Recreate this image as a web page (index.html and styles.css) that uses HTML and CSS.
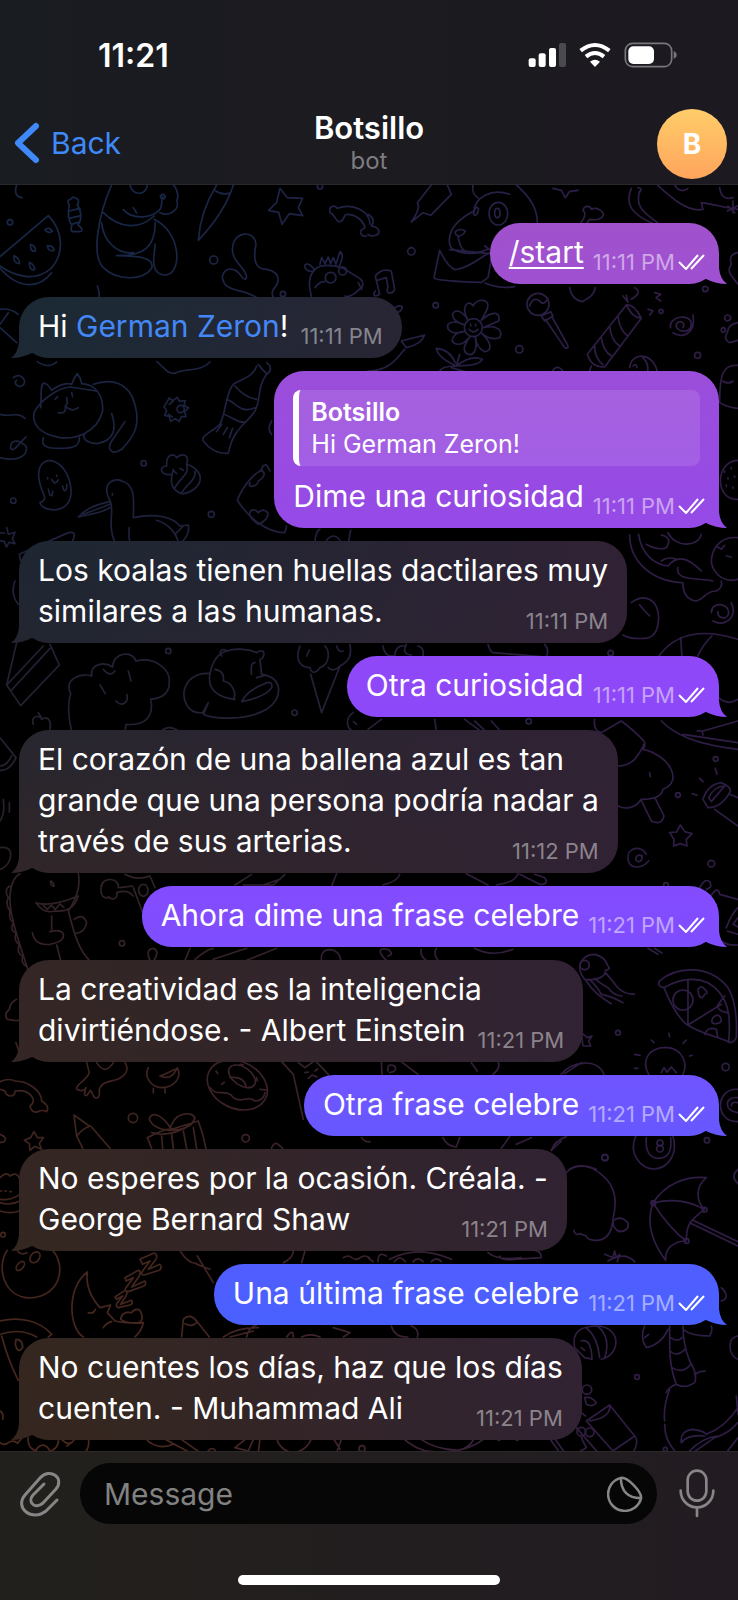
FILE: index.html
```html
<!DOCTYPE html>
<html lang="es">
<head>
<meta charset="utf-8">
<meta name="viewport" content="width=device-width, initial-scale=1">
<title>Botsillo</title>
<link rel="stylesheet" href="styles.css">
</head>
<body>
<svg class="defs" aria-hidden="true">
  <symbol id="checks" viewBox="0 0 27 16">
    <path d="M1 8 L8 15 L20 1 M13 15 L26 1" fill="none" stroke="currentColor" stroke-width="2"/>
  </symbol>
</svg>
<div class="app">
  <header class="top">
    <div class="status">
      <span class="clock">11:21</span>
      <svg class="status-icons" viewBox="25 36 450 78" aria-hidden="true">
        <g fill="#fff">
          <rect x="27" y="85" width="21" height="26" rx="6"/>
          <rect x="57" y="70" width="21" height="41" rx="6"/>
          <rect x="88" y="54" width="21" height="57" rx="6"/>
          <rect x="118" y="39" width="21" height="72" rx="6" fill="#4b4a4e"/>
          <path d="M211 95 Q226 83 241 95 L226 111 Z"/>
          <rect x="326" y="49" width="77" height="53" rx="15"/>
        </g>
        <g fill="none" stroke="#fff" stroke-width="12">
          <path d="M183 62 Q226 28 269 62"/>
          <path d="M199 80 Q226 58 253 80"/>
        </g>
        <rect x="317" y="40" width="139" height="70" rx="22" fill="none" stroke="#77767a" stroke-width="5"/>
        <path d="M462 64 Q471 67 471 75 Q471 83 462 86 Z" fill="#77767a"/>
      </svg>
    </div>
    <div class="nav">
      <button class="back" type="button">
        <svg class="chevron" viewBox="0 0 26 42" aria-hidden="true"><path d="M22 4 L4 21 L22 38" fill="none" stroke="currentColor" stroke-width="6" stroke-linecap="round" stroke-linejoin="round"/></svg>
        Back
      </button>
      <div class="title">
        <h1>Botsillo</h1>
        <span>bot</span>
      </div>
      <button class="avatar" type="button" aria-label="Botsillo">B</button>
    </div>
  </header>

  <main class="chat">
    <svg class="wallpaper" viewBox="0 184 738 1267" preserveAspectRatio="xMidYMin slice" aria-hidden="true">
      <defs>
        <linearGradient id="down" x1="0" y1="0" x2="0" y2="1">
          <stop offset="0" stop-color="#172748"/><stop offset=".28" stop-color="#1e213b"/><stop offset=".5" stop-color="#2a212d"/><stop offset=".7" stop-color="#3e2320"/><stop offset="1" stop-color="#4a281c"/>
        </linearGradient>
        <linearGradient id="across" x1="0" y1="0" x2="1" y2="0">
          <stop offset=".2" stop-color="#2d1c44" stop-opacity="0"/><stop offset=".85" stop-color="#2f1d46"/>
        </linearGradient>
        <mask id="doodles" maskUnits="userSpaceOnUse" x="0" y="184" width="738" height="1267">
          <g fill="none" stroke="#fff" stroke-width="5" stroke-linecap="round" stroke-linejoin="round">
            <g transform="translate(0 180) scale(.3333)">
              <path d="M50 12 C42 35 50 50 66 50 M0 227 L145 104 C190 150 195 220 150 265 C105 300 50 290 0 255 M0 262 C60 330 120 320 155 275"/>
              <path d="M135 146 q12 -10 22 4 q-12 10 -22 -4 M92 190 q16 6 14 20 q-16 4 -14 -20 M142 194 q20 0 20 14 q-18 4 -20 -14 M42 224 q18 8 16 24 q-18 0 -16 -24 M88 244 q16 8 16 22 q-16 4 -16 -22"/>
              <path d="M208 72 C195 52 215 60 218 48 C228 50 242 55 232 72 C246 92 246 115 234 132 C252 145 246 152 238 152 H220 C212 152 212 142 216 134 C202 115 204 90 208 72 M208 90 L240 82 M208 112 L242 104 M216 130 L240 122"/>
              <path d="M335 12 C300 90 270 220 310 260 C350 300 430 300 455 262 C465 225 400 225 350 224 C430 225 465 200 466 125 M310 95 C360 145 420 145 462 105 M305 125 C310 180 350 220 400 215 M462 115 C540 150 550 270 500 282 C450 285 460 230 466 190 M390 12 C395 45 440 45 442 12 M370 86 C400 120 460 110 480 85 C490 70 482 55 489 47 M400 80 L410 96 M489 40 a7 7 0 1 1 -1 0 M480 95 C515 110 540 80 530 60 C540 40 525 15 520 12"/>
              <path d="M650 12 C620 60 600 110 595 178 C650 120 685 60 700 12 M645 28 Q668 45 692 35"/>
              <path d="M840 22 L862 50 L908 52 L895 80 L908 104 L868 98 L846 130 L836 94 L806 88 L830 64 Z"/>
              <path d="M990 95 C985 75 1005 70 1012 82 C1060 65 1110 90 1110 130 M990 95 C1005 100 1008 125 1020 122 C1035 120 1030 100 1040 100 C1070 100 1090 120 1095 140 C1070 150 1085 170 1100 165"/>
              <path d="M770 350 C735 325 700 335 675 310 C655 280 680 255 705 268 C725 275 725 300 738 294 C750 270 690 240 698 200 C700 150 765 145 768 190 C755 250 775 265 800 265 C850 275 835 310 820 325 C812 340 820 350 825 355"/>
              <path d="M935 350 C925 310 925 285 945 265 C960 250 1000 250 1030 262 L1075 290 C1095 300 1090 320 1078 325 C1060 345 1040 350 1035 345 M940 272 C905 270 910 240 930 252 Q942 262 944 268 M960 250 L965 230 L975 248 L985 228 L992 248 L1000 230 L1008 250 L1020 212 Q1035 220 1018 255 M945 320 Q960 300 975 302 M1075 305 L1085 325"/>
              <circle cx="992" cy="290" r="16"/><circle cx="1028" cy="270" r="12"/><circle cx="30" cy="124" r="8"/><circle cx="641" cy="237" r="12"/><circle cx="849" cy="339" r="8"/><circle cx="960" cy="16" r="8"/><circle cx="431" cy="847" r="8"/><circle cx="40" cy="959" r="8"/><circle cx="634" cy="1000" r="9"/>
              <path d="M292 315 Q300 335 297 355 M0 385 Q30 380 55 400 M0 440 L50 485 M0 430 L25 395 M470 542 C490 555 500 580 525 577 C555 560 600 575 630 543 M112 542 Q145 565 170 543"/>
              <path d="M40 590 C60 575 82 595 70 612 C55 625 38 605 50 598 M0 700 C30 710 50 690 75 712 M0 830 C60 845 85 820 78 795 C50 770 30 780 32 802 C40 815 55 790 78 768"/>
              <path d="M122 680 C125 640 120 610 132 606 Q145 610 155 628 C180 610 200 605 215 610 Q222 590 232 578 Q242 590 245 608 C285 610 310 640 308 690 C290 760 220 775 180 770 C120 760 95 730 102 695 C125 650 180 620 210 618 L290 630 M280 610 C340 590 380 610 398 650 C425 720 410 760 365 805 C335 825 320 805 335 780 L375 722 M335 698 C350 740 345 780 290 788 C250 785 245 765 258 755 M130 770 C120 800 150 802 180 802 C215 802 240 798 238 770 M200 650 Q205 670 196 675 Q200 700 175 695 M196 675 Q215 695 235 680 M165 655 l8 -8 M215 635 l3 12"/>
              <path d="M500 665 l8 -14 l10 8 l14 -10 l6 12 l18 -2 l-4 14 l14 8 l-12 10 l4 16 l-14 0 l-6 14 l-12 -8 l-14 8 l-4 -14 l-14 -4 l6 -14 l-8 -12 z M520 660 l-12 10 M505 700 l12 8"/><circle cx="542" cy="684" r="11"/>
              <path d="M770 555 C758 590 730 590 700 610 C675 640 680 690 660 730 C640 750 600 765 610 780 Q640 820 685 817 C700 740 740 730 765 690 C785 650 770 620 800 580 C815 570 815 555 800 545 M775 550 Q785 565 800 578 M705 615 Q735 650 770 655 M680 655 C710 665 720 700 765 680 M672 700 C700 710 720 730 738 722 M665 730 l-15 22 M682 740 l-12 20 M698 742 l-10 28"/>
              <path d="M515 880 C480 885 475 855 500 855 C498 820 520 815 530 830 C545 815 570 820 560 850 C590 860 605 880 600 900 C595 920 565 940 545 938 C510 925 510 900 520 865 M560 852 C570 880 540 890 525 920 M585 870 C590 895 560 910 545 935 M522 870 l8 8 M540 862 l10 6"/>
              <path d="M120 965 C140 960 135 945 125 925 C105 870 120 840 150 838 C195 845 215 900 213 940 C210 975 180 990 155 986 C135 985 122 975 120 965 M145 925 C150 950 158 950 158 930 M188 915 C190 935 202 935 200 910 M155 895 Q165 915 175 897 M143 890 v4 M170 882 v4"/>
              <path d="M345 1085 C320 1030 345 990 330 960 C300 900 350 890 365 900 C410 910 400 970 400 1010 C470 995 520 1010 540 1035 L565 1032 Q570 1060 545 1084 M330 962 C290 970 255 985 235 1008 C270 1000 310 995 330 980 M330 970 L250 1000 M388 1040 Q385 1065 390 1085 M470 1018 C510 1030 530 1060 535 1085 M525 1060 L550 1035 M337 938 v5"/>
              <path d="M20 1040 l5 20 l20 -6 l-8 20 l8 14 l-18 -4 l-8 14 l-6 -16 l-16 -4 M0 1055 l14 2 z M58 1120 L205 1055 Q235 1050 215 1085 M58 1120 L62 1140"/>
              <path d="M855 1055 C800 1055 745 1010 712 958 C730 910 770 870 785 870 Q785 850 800 852 L810 870 M855 1055 L860 1035 M750 905 C740 925 775 915 775 900 C800 885 795 870 780 868 M775 1030 Q740 1005 752 990 Q765 982 775 995 Q790 980 803 995 Q808 1015 775 1030 M815 720 Q800 745 815 760"/>
              <path d="M945 1085 C945 1060 955 1045 960 1045 M975 1085 Q1000 1045 1025 1085 M1045 1085 L1052 1048"/>
            </g>
            <g transform="translate(368 180) scale(.3333)">
              <path d="M190 12 L148 65 Q160 80 130 123 L165 95 L188 103 L250 40 L238 12 M0 100 Q25 115 10 135 Q40 140 30 160 Q10 170 0 160"/>
              <path d="M315 12 C312 30 318 45 330 50 M425 40 C370 20 320 50 318 90 C250 125 240 160 245 190 C250 215 310 225 345 210 L360 205 M445 12 C490 50 510 90 508 130 M262 152 Q275 140 292 150 Q285 165 270 165 Q260 160 262 152 M270 165 Q275 200 290 210 M350 195 l16 12"/>
              <ellipse cx="391" cy="98" rx="28" ry="34"/><ellipse cx="388" cy="96" rx="8" ry="14"/><ellipse cx="324" cy="91" rx="6" ry="12" transform="rotate(20 324 91)"/>
              <path d="M215 208 L198 290 Q205 300 340 304 L360 290 L372 225 M215 208 Q240 260 262 266 C310 260 340 225 365 215 M245 206 L365 218 M350 306 Q400 325 440 317"/>
              <path d="M555 22 L580 28 L592 50 L604 32 L630 28 M635 130 Q660 100 645 88 C650 70 668 75 670 85 C690 75 710 95 705 105 Q695 120 665 115 L655 130"/>
              <path d="M790 22 C770 70 790 100 860 130 M815 30 C800 80 830 95 872 128 M810 20 q15 2 5 14 M870 14 C910 50 960 95 1005 85 L1000 65 C1040 70 1070 80 1110 85 M920 12 C935 35 950 30 960 22 M1055 20 Q1060 60 1095 50 M1080 75 l20 20 M1095 60 v35 M1078 90 l30 -15"/>
              <path d="M22 330 C12 345 22 348 35 340 L22 285 Q40 260 70 270 L80 325 C70 345 50 335 60 320 L55 290 L28 298 M75 385 Q90 370 103 377 Q102 392 85 395"/>
              <circle cx="130" cy="211" r="11"/><circle cx="203" cy="373" r="8"/><circle cx="454" cy="505" r="11"/><circle cx="989" cy="523" r="9"/><circle cx="1012" cy="324" r="8"/><circle cx="879" cy="391" r="6"/>
              <circle cx="316" cy="440" r="27"/>
              <path d="M300 418 C275 370 305 355 315 375 C325 350 375 350 355 390 L340 418 C375 385 400 395 392 420 L345 440 C390 430 405 450 395 470 Q370 480 342 458 C375 490 370 510 350 512 Q325 500 322 468 C330 510 315 525 300 520 C280 510 290 490 305 468 C280 500 260 490 252 480 Q255 455 292 450 C250 465 235 445 240 430 Q255 415 290 432 C250 420 245 395 265 390 Q285 390 300 418 M308 430 v5 M323 430 v5 M303 445 Q316 460 330 445"/>
              <path d="M275 520 L265 555 M265 555 Q210 530 205 502 Q245 505 262 545 M265 555 Q310 520 343 535 Q335 555 265 555 Q220 555 215 572 M250 560 L300 575 M0 570 C70 570 95 520 110 505 M100 480 L170 462 Q160 490 115 500 Z"/>
              <circle cx="510" cy="370" r="33"/><path d="M485 375 Q495 345 515 360 Q525 375 540 355 M520 405 L548 392 L555 405 L530 420 Z M532 415 L590 500 Q605 505 598 490 L552 408 M605 320 Q610 355 642 362 Q680 345 682 320"/>
              <path d="M775 372 L658 520 Q670 560 710 558 L820 412 Q800 370 775 372 C790 400 800 410 820 412 M750 405 Q755 450 780 465 M725 435 Q730 480 755 495 M700 470 Q705 510 730 525 M680 495 Q680 530 705 552 M670 555 L662 578 M765 345 l15 18 l-5 -20 M800 320 Q825 335 790 355 M860 335 l18 5 l-14 10 l14 10 M840 385 l15 5 l-10 12"/>
              <path d="M908 440 C900 405 970 395 970 430 C970 460 920 455 925 430 C935 415 955 425 945 440 M975 402 C985 460 940 475 915 455 M785 560 C790 510 860 515 868 575 M795 555 q10 -10 12 5 M825 530 Q845 550 838 578 M548 578 Q568 540 590 578"/>
              <path d="M1110 425 Q1080 430 1078 455 Q1065 475 1085 485 L1110 478 M1065 440 a6 7 0 1 0 2 0 M1078 402 a9 9 0 1 0 2 0 M1110 553 C1065 550 1055 580 1055 665 Q1080 680 1110 682 M1065 600 Q1080 612 1095 600 M1110 838 C1040 840 1040 960 1110 955 M1070 870 v4 M1090 860 v4 M1080 890 v4 M1100 885 v4 M1075 912 v4 M1095 918 v4 M1110 215 Q1080 220 1090 250 Q1075 270 1095 290 L1110 310"/>
            </g>
            <g transform="translate(0 530) scale(.3333)">
              <path d="M45 150 Q30 190 55 220 M50 335 L20 462 L62 524 L178 402 L150 340 M20 462 L130 345 M32 480 L150 352 M0 620 L48 680 Q30 720 0 718 M35 675 Q20 705 0 705"/>
              <path d="M215 600 C200 540 205 510 212 488 C190 440 250 425 275 435 C270 400 310 390 338 408 C340 360 400 360 408 390 C470 375 510 420 508 450 Q510 500 452 505 C465 560 430 585 378 580 L375 600 M310 415 Q330 440 345 420 M385 420 l8 30 M300 462 l16 26 M348 510 C365 530 388 515 380 490"/>
              <path d="M100 580 C90 555 120 550 125 565 C150 550 155 580 148 600 M125 562 L115 545 M485 600 Q505 580 535 600 M0 490"/>
              <path d="M610 550 L625 515 L608 545 C560 550 545 500 555 470 C570 430 610 425 630 428 C640 380 660 365 680 360 C710 350 750 355 770 365 C800 345 795 385 780 385 L785 430 C850 440 850 500 800 535 C740 570 640 565 610 550 M665 375 C650 355 680 350 680 362 M630 428 C620 480 660 500 705 505 M645 415 Q675 420 670 450 C700 455 710 490 700 505 M725 512 Q740 480 790 460 Q820 445 815 470 C800 495 760 505 725 512 M765 395 Q750 395 755 430 M770 440 L800 432"/>
              <path d="M900 345 C880 395 910 410 930 410 C935 435 955 420 960 410 C990 400 990 360 975 345 M985 410 Q1000 425 1020 405 C1050 390 1055 370 1050 340 M932 430 L965 545 L1020 405 M1010 345 Q1015 365 1030 360 M920 375 l8 -18 M1060 545 C1035 560 1040 590 1055 598 M1060 572 l10 8"/>
              <circle cx="505" cy="360" r="8"/><circle cx="884" cy="545" r="8"/>
              <path d="M10 805 Q15 850 0 870 M28 815 v28 M0 950 Q40 945 30 985 Q20 1010 0 1015"/>
            </g>
            <g transform="translate(368 530) scale(.3333)">
              <path d="M785 12 C785 90 850 150 940 155 M812 10 C820 70 860 100 900 105 C930 70 960 80 1000 120 M835 40 Q870 60 895 50 Q915 20 880 12 M900 5 C920 50 990 50 1000 10 M880 90 Q900 75 925 85 M930 110 C920 150 990 140 1035 150 M1110 20 C1050 15 1030 60 1030 95 C1040 140 1080 155 1110 145 M1045 45 l15 10 l10 -12 M1075 75 l15 3"/>
              <path d="M945 155 Q945 205 985 210 C1010 205 1010 180 1045 180 Q1065 170 1060 150 M790 215 C830 185 870 205 872 260 Q870 320 830 322 Q785 325 765 312 M815 222 Q830 240 845 255"/>
              <path d="M1030 245 C1030 210 1085 215 1082 248 C1075 270 1045 260 1050 242 M1090 215 C1110 260 1070 290 1035 270 M873 375 C920 310 1000 290 1110 325 M938 320 L942 378 M1032 315 Q1005 340 988 378 M1052 500 Q1080 525 1110 505"/>
              <circle cx="728" cy="366" r="8"/><circle cx="482" cy="571" r="8"/><circle cx="1043" cy="684" r="7"/><circle cx="930" cy="792" r="7"/><circle cx="1030" cy="998" r="10"/>
              <path d="M45 345 Q50 380 80 375 Q85 340 110 345 M115 340 Q100 370 130 372 M150 345 Q170 350 165 375 M360 340 Q365 360 375 365 L535 378 Q545 355 530 340"/>
              <path d="M680 565 Q675 600 700 605 L760 570 Q800 600 828 630 Q835 645 825 655 C900 670 950 750 885 775 Q880 805 820 805 C800 835 770 835 750 825 M750 705 Q780 705 800 685 Q820 660 828 640 M820 808 L850 870 Q880 885 888 855 L862 803 M845 725 l2 12"/>
              <path d="M880 570 C920 610 980 640 1110 655 M945 610 L1110 635 M988 600 Q1005 595 1005 612 M1005 600 L1110 570"/>
              <path d="M1005 805 Q1020 760 1060 755 Q1095 770 1085 785 Q1060 830 1020 830 Z M1022 800 Q1040 765 1070 765 L1030 812 Z M1040 835 L1110 885 M1085 790 L1110 800 M1042 712 l5 18 M995 742 l10 10 M973 788 l14 5"/>
              <path d="M937 882 L950 902 L972 908 L955 925 L957 945 L937 938 L917 945 L918 925 L905 905 L926 903 Z M835 970 C820 940 775 950 780 985 C785 1015 820 1015 842 990 M822 975 C805 965 795 990 812 992 Q825 990 822 975"/>
              <path d="M200 565 L205 598 M290 565 L335 598 M320 570 L350 598 M370 570 L395 598 M0 595 L40 565"/>
            </g>
            <g transform="translate(0 870) scale(.3333)">
              <path d="M85 300 C60 220 25 130 30 70 Q35 20 60 8 M235 8 Q245 60 205 120 C225 200 240 240 268 268 M108 95 Q150 110 235 75 Q220 125 165 120 M108 95 Q130 130 165 120 M130 103 l12 12 l12 -12 l12 12 l14 -16 l12 10 M155 135 V175 M97 185 Q105 225 150 220 Q200 210 188 185 Q175 175 150 182 M170 222 L182 268 M222 145 Q250 125 260 155 Q255 185 225 188 M30 45 Q10 55 25 80 Q15 100 30 120 Q25 145 40 155 Q28 180 48 185 Q40 210 58 220 Q48 245 68 255 Q62 275 78 285"/>
              <path d="M152 30 q10 4 10 16 q-12 -2 -10 -16 M355 50 C360 20 305 15 303 50 C300 80 320 85 325 78 C340 90 355 80 350 65 C380 55 390 65 400 75 M360 50 L398 45 M375 10 Q410 30 450 15 L465 50 M400 50 L430 130 M705 42 L755 10 M730 42 L820 42 L855 10 M790 42 L840 25 M1010 8 L995 45"/>
              <ellipse cx="430" cy="58" rx="14" ry="18"/><circle cx="366" cy="217" r="8"/><circle cx="399" cy="741" r="14"/><circle cx="737" cy="802" r="11"/>
              <path d="M450 268 Q435 235 460 232 Q480 240 462 268 M555 268 L570 232 M585 265 Q620 235 640 232 M640 265 L740 232 M740 268 L830 232 M965 268 C955 225 1020 225 1022 268 M50 385 Q30 395 28 415 Q10 430 22 445 Q40 450 55 448 M48 515 L60 550"/>
              <path d="M0 632 Q25 620 45 630 C85 630 125 660 125 690 Q150 705 140 722 Q125 715 115 722 Q95 728 90 705 Q110 690 90 670 Q75 655 45 660 C45 680 20 680 15 660 L0 655 M0 790 Q25 800 12 812 L0 815"/>
              <path d="M102 782 L112 800 L130 800 L118 818 L125 835 L104 826 L90 838 L88 818 L73 808 L92 800 Z"/>
              <path d="M260 575 L268 605 C255 635 225 640 230 655 Q250 665 258 650 Q248 680 262 672 L272 658 L282 678 Q300 690 298 655 C310 620 355 640 378 605 Q385 590 375 575 M290 575 Q315 615 340 575 M445 590 C430 620 455 650 490 650 C530 645 545 615 532 590 Q515 630 480 615 Q495 610 525 595 M460 652 v14 M495 652 v14"/>
              <ellipse cx="712" cy="642" rx="94" ry="70" transform="rotate(25 712 642)"/><ellipse cx="726" cy="616" rx="45" ry="27" transform="rotate(35 726 616)"/>
              <path d="M630 650 C650 680 680 650 700 680 C725 700 740 670 765 690 Q790 690 795 665 M690 620 Q730 615 738 645 M648 600 l5 8 M665 640 l8 -6 M720 580 l10 2 M770 620 l2 10 M780 655 l20 2"/>
              <path d="M330 832 L272 765 Q250 770 230 795 L248 832 M230 795 L222 732 L268 765 M222 732 L240 745"/>
              <path d="M442 800 L455 832 M442 800 Q500 770 515 775 L595 750 Q610 790 618 832 M455 785 L480 790 Q530 790 575 760 M485 795 L488 832 M515 790 L520 832 M550 780 L560 832 M580 770 L590 832 M515 775 C480 720 450 725 448 745 Q460 775 510 778 C520 720 580 720 585 742 Q570 775 515 778"/>
              <path d="M845 572 L880 610 L910 745 M895 575 L915 590 L945 568 L985 610 M915 605 l10 -2 M945 600 l8 -6 M925 622 l12 -10 l14 6 M815 832 Q820 815 832 818 L848 832 M1085 800 Q1095 815 1110 812"/>
            </g>
            <g transform="translate(368 870) scale(.3333)">
              <path d="M45 42 Q90 30 95 10 M295 8 L360 42 M385 42 Q440 35 450 8 M455 10 L515 40 Q545 40 530 20 L500 10 M55 268 C25 240 35 230 60 235 Q80 250 60 255 M160 235 Q155 255 175 268 M205 232 Q195 250 210 268 M320 232 Q370 260 435 235 M840 232 l30 18 M860 232 l22 14"/>
              <path d="M995 50 Q1010 20 1025 32 Q1035 50 1015 55 M1025 80 Q1050 40 1055 70 L1110 85 M1075 170 Q1090 130 1110 110 M1078 180 L1110 190 M1060 210 Q1080 225 1110 222 M1110 140 l-15 20 l15 8"/>
              <path d="M650 325 C620 290 640 250 680 250 C705 255 715 270 720 285 Q730 295 712 298 Q715 310 700 318 Q680 330 650 325 M655 330 Q680 370 730 398 M665 325 Q690 350 700 370 Q730 375 765 395 M680 322 Q700 340 720 350 Q740 375 762 375 M712 305 Q735 330 745 345 Q765 370 800 370"/><circle cx="650" cy="282" r="14"/>
              <path d="M888 350 Q865 345 875 330 C920 290 1020 275 1080 350 Q1110 400 1105 500 Q1095 520 1080 512 C1060 500 1000 490 955 460 Q920 430 888 350 Q960 310 1020 335 C1080 370 1090 430 1082 510 M960 325 V462 L1060 400 M1010 490 Q1020 465 1045 475 L1050 500 M990 355 Q1000 340 1010 355 Q1025 365 1010 370 Q1000 390 992 370 Z M1035 440 Q1050 425 1058 440 Q1065 455 1045 458 Q1025 460 1035 440 M1050 400 Q1045 420 1078 425 M1052 398 L1070 375"/><circle cx="945" cy="387" r="30"/>
              <path d="M842 610 C820 570 840 530 893 529 C945 530 960 580 945 610 M880 605 L888 590 L897 604 L910 588 L925 605 M902 487 l3 10 M850 507 l8 8 M955 507 l-10 10 M800 550 l16 3 M965 555 l8 -2 M800 592 h10 M645 525 L640 485 L658 500 L672 495 L662 510 L668 525 Z"/>
              <path d="M580 610 C610 570 690 560 708 610 M590 608 L640 575 M40 572 L42 610 M100 572 L150 610 M60 600 Q55 575 80 585 Q90 600 65 605 M390 572 Q400 590 375 610 M310 575 L328 600"/>
              <path d="M1110 655 C1040 650 1040 755 1110 752 M1110 680 C1070 675 1065 720 1110 725 M1110 695 Q1090 690 1090 705"/>
              <circle cx="750" cy="485" r="7"/><circle cx="1073" cy="588" r="11"/><circle cx="1017" cy="808" r="8"/><circle cx="711" cy="860" r="9"/><circle cx="894" cy="42" r="7"/>
              <path d="M803 796 C780 850 820 895 860 894 C905 890 930 845 915 796 M835 800 Q830 860 872 862 Q915 860 908 800"/><circle cx="876" cy="816" r="9"/><circle cx="876" cy="833" r="10"/>
              <path d="M550 838 Q560 810 595 797 M605 895 Q640 875 685 895 M400 832 L425 797 M445 820 L490 800 M225 800 Q235 825 265 828 L275 800"/>
            </g>
            <g transform="translate(0 1140) scale(.3333)">
              <path d="M0 110 Q20 90 30 105 Q50 90 60 115 M0 150 h5 M15 150 h4 M30 152 h4 M0 175 Q30 180 60 160 M0 210 Q30 220 58 210 M0 185 Q30 195 60 180"/><circle cx="9" cy="281" r="7"/>
              <path d="M22 328 C-10 370 5 470 92 471 C185 465 200 370 155 325 M50 325 Q60 345 80 335"/><ellipse cx="61" cy="375" rx="9" ry="16" transform="rotate(40 61 375)"/><ellipse cx="105" cy="349" rx="13" ry="18" transform="rotate(40 105 349)"/>
              <path d="M250 588 C205 560 200 440 262 393 Q255 450 300 500 L332 492 L322 515 L345 540 Q400 550 430 545 Q425 570 405 588 M265 515 Q280 520 286 505 M310 560 Q320 545 335 542 M362 535 Q365 510 395 515 Q405 500 420 508 Q435 540 415 545 Q380 548 362 535"/>
              <path d="M345 468 L375 448 Q385 450 378 465 L362 490 L395 478 Q400 490 390 492 L355 500 Q345 495 352 485 L368 465 L350 475 Z M375 410 L415 388 Q425 390 418 405 L395 438 L435 420 Q440 432 430 436 L385 452 Q372 450 378 440 L400 410 L378 420 Z M420 355 L462 336 Q475 340 468 355 L445 385 L480 370 Q488 380 478 388 L432 402 Q420 402 428 390 L450 360 L428 370 Z"/>
              <path d="M0 540 C60 525 120 540 155 580 L145 588 M0 580 Q60 560 110 588 M5 585 Q25 660 55 718 M48 595 q20 0 20 25 q-15 20 -22 -10 Z M0 810 Q12 815 8 835"/>
              <path d="M540 328 Q560 365 590 368 M592 345 L640 425 M590 370 L630 385 M545 588 L550 535 Q570 515 590 540 L628 588 M555 548 Q575 560 590 545 M670 588 Q710 560 775 560 M690 588 L760 570 M740 588 Q745 560 770 552 M860 588 Q880 560 880 588 M905 588 Q930 575 960 588 M1000 560 L1050 575 L1030 588 M850 365 Q880 350 880 330 M905 365 L915 330 M1030 350 q15 -10 25 0 q15 10 25 0 q15 -10 28 0"/>
              <path d="M0 905 q15 10 25 0 q15 -10 28 2 L65 892 M85 890 Q80 930 130 935 Q180 930 175 890 M105 930 Q130 895 150 930 M185 895 Q210 920 225 892 M200 915 L215 905 M265 892 Q270 920 255 935 M435 892 Q470 930 520 910 M490 892 L570 935 M540 892 L600 935 M620 935 Q640 910 648 935 M740 892 L705 920 L745 930 L760 895 M780 892 L775 935 M830 892 Q840 930 880 935 Q920 930 935 892 M1000 892 L1020 925 M1025 892 L1010 935"/><circle cx="1086" cy="923" r="9"/>
            </g>
            <g transform="translate(368 1140) scale(.3333)">
              <path d="M550 28 L580 0 M595 95 C620 65 665 70 700 100 C750 140 745 190 735 235 Q730 300 680 298 Q655 295 655 285 L635 278 M735 240 Q755 220 780 245 Q785 270 755 272 Q735 265 735 240 M618 268 Q620 285 638 278 M1110 85 Q1085 105 1110 128"/>
              <path d="M855 186 C890 130 950 105 1015 110 C980 140 985 180 1010 206 Q940 165 855 186 C890 240 920 275 955 300 C955 260 960 240 1010 206 M855 186 C835 240 850 300 893 358 C890 320 920 300 955 300 M965 245 L1110 315 M975 238 L1110 302"/>
              <circle cx="856" cy="186" r="7"/><circle cx="1010" cy="206" r="7"/><circle cx="956" cy="300" r="7"/><circle cx="711" cy="50" r="9"/><circle cx="807" cy="708" r="7"/><circle cx="657" cy="746" r="14"/><circle cx="640" cy="872" r="13"/><circle cx="665" cy="874" r="13"/><circle cx="892" cy="925" r="6"/>
              <path d="M710 340 L735 350 L740 330 L745 350 L755 340 L748 362 M720 360 Q770 330 800 362 M0 350 L15 362 M30 362 Q30 330 55 345 M65 355 Q150 310 250 355 M80 362 Q95 340 112 362 M135 362 Q150 345 165 362 M190 362 Q205 345 220 362 M360 335 Q390 360 460 350 M395 345 Q400 360 440 355 L520 350 Q520 330 500 328"/>
              <path d="M620 620 C610 570 640 555 690 555 C760 560 760 640 700 655 M640 600 Q670 590 672 655 L650 650 M655 560 Q690 590 695 650 M690 556 Q730 590 710 652 M640 620 l10 8 M620 620 L650 650 M1060 440 Q1090 470 1060 480"/>
              <path d="M830 555 Q815 590 835 620 Q880 610 900 565 M830 590 l12 -10 M945 565 Q970 585 1025 585 Q1035 570 1030 555 M905 555 L905 610 Q905 680 925 730 Q950 745 980 725 Q990 700 965 660 Q945 610 945 555 M908 590 q20 15 35 0 M906 630 q20 20 45 -5 M912 680 q30 20 55 -8 M980 700 Q995 690 1012 690 M925 730 Q900 740 895 755 M1110 585 Q1080 590 1088 630 Q1095 650 1110 655"/>
              <path d="M725 792 L800 885 Q815 900 795 935 M725 792 L655 840 L735 930 L800 885 M725 792 Q730 830 665 840 M650 770 Q670 765 685 785 Q675 800 655 790 Z M625 860 L690 935 M640 890 L655 920 L630 935 M545 892 L575 935 M560 892 L590 935 M640 815 l12 10 M905 745 Q885 800 890 840 M890 850 Q890 900 925 935"/>
              <path d="M940 905 Q935 870 975 865 Q1010 870 1015 880 Q1070 860 1110 800 M960 935 Q1000 890 1050 885 M975 935 L1040 890 Q1080 880 1110 845 M940 905 Q960 880 1010 885 M1075 935 L1110 890 M1105 765 L1110 820"/>
              <path d="M105 892 Q150 930 190 932 Q290 940 350 892 M155 892 Q200 925 270 928 Q300 925 320 892 M70 555 Q80 590 120 588 M130 555 Q155 565 148 588 M385 892 q8 12 15 0 M440 892 q8 12 15 0"/>
            </g>
          </g>
        </mask>
      </defs>
      <g mask="url(#doodles)">
        <rect y="184" width="738" height="1267" fill="url(#down)"/>
        <rect y="184" width="738" height="1267" fill="url(#across)"/>
      </g>
    </svg>

    <article class="msg out"><p><a href="#start">/start</a><span class="stamp"><time>11:11 PM</time><svg class="checks"><use href="#checks"/></svg></span></p></article>
    <article class="msg in"><p>Hi <a href="#german">German Zeron</a>!<span class="stamp"><time>11:11 PM</time></span></p></article>
    <article class="msg out has-reply">
      <blockquote class="reply"><strong>Botsillo</strong><span>Hi German Zeron!</span></blockquote>
      <p>Dime una curiosidad<span class="stamp"><time>11:11 PM</time><svg class="checks"><use href="#checks"/></svg></span></p>
    </article>
    <article class="msg in"><p>Los koalas tienen huellas dactilares muy<br>similares a las humanas.<span class="stamp"><time>11:11 PM</time></span></p></article>
    <article class="msg out"><p>Otra curiosidad<span class="stamp"><time>11:11 PM</time><svg class="checks"><use href="#checks"/></svg></span></p></article>
    <article class="msg in"><p>El corazón de una ballena azul es tan<br>grande que una persona podría nadar a<br>través de sus arterias.<span class="stamp"><time>11:12 PM</time></span></p></article>
    <article class="msg out"><p>Ahora dime una frase celebre<span class="stamp"><time>11:21 PM</time><svg class="checks"><use href="#checks"/></svg></span></p></article>
    <article class="msg in"><p>La creatividad es la inteligencia<br>divirtiéndose. - Albert Einstein<span class="stamp"><time>11:21 PM</time></span></p></article>
    <article class="msg out"><p>Otra frase celebre<span class="stamp"><time>11:21 PM</time><svg class="checks"><use href="#checks"/></svg></span></p></article>
    <article class="msg in"><p>No esperes por la ocasión. Créala. -<br>George Bernard Shaw<span class="stamp"><time>11:21 PM</time></span></p></article>
    <article class="msg out"><p>Una última frase celebre<span class="stamp"><time>11:21 PM</time><svg class="checks"><use href="#checks"/></svg></span></p></article>
    <article class="msg in"><p>No cuentes los días, haz que los días<br>cuenten. - Muhammad Ali<span class="stamp"><time>11:21 PM</time></span></p></article>
  </main>

  <footer class="bottom">
    <form class="composer">
      <button class="icon" type="button" aria-label="Attach">
        <svg width="44" height="48" viewBox="0 0 44 48"><path d="M39 30 L28 41 C14 52 -4 38 7 25 L22 8 C32 -3 47 8 38 19 L25 33 C17 40 9 32 15 25 L26 14"/></svg>
      </button>
      <div class="field">
        <input type="text" placeholder="Message" aria-label="Message">
        <button class="icon" type="button" aria-label="Stickers">
          <svg width="36" height="36" viewBox="48 57 114 114"><path stroke-width="8" d="M92 63 A53 53 0 1 0 156 127 C158 105 110 58 92 63 C92 105 115 128 156 127"/></svg>
        </button>
      </div>
      <button class="icon" type="button" aria-label="Record">
        <svg width="44" height="49" viewBox="258 43 132 147"><path stroke-width="8" d="M324 48 A28 28 0 0 1 352 76 V110 A28 28 0 0 1 296 110 V76 A28 28 0 0 1 324 48 Z M275 108 A49 50 0 0 0 373 108 M324 158 V184"/></svg>
      </button>
    </form>
    <div class="home"></div>
  </footer>
</div>
</body>
</html>
```
FILE: styles.css
```css
* {
  box-sizing: border-box;
}

body {
  margin: 0;
  background: #000;
  color: #fff;
  font-family: Inter, "Liberation Sans", sans-serif;
}

button {
  padding: 0;
  border: 0;
  background: none;
  color: inherit;
  font: inherit;
}

.defs {
  position: absolute;
  width: 0;
  height: 0;
}

.app {
  display: flex;
  flex-direction: column;
  min-height: 100vh;
}

.top {
  padding: 35px 11px 5px;
  border-bottom: 1px solid #29282c;
  background: linear-gradient(to right, #191c21, #1c1b20 50%, #1c1a20);
}

.status {
  display: flex;
  justify-content: space-between;
  align-items: center;
  height: 40px;
  padding: 0 49px 0 87px;
}

.clock {
  font-size: 32px;
  font-weight: 600;
}

.status-icons {
  width: 150px;
  height: 26px;
}

.nav {
  display: grid;
  grid-template-columns: 1fr auto 1fr;
  align-items: center;
  height: 70px;
  margin-top: 34px;
}

.back {
  display: flex;
  align-items: center;
  gap: 11px;
  justify-self: start;
  padding: 0 0 3px 3px;
  color: #3f8af8;
  font-size: 30px;
}

.chevron {
  width: 26px;
  height: 42px;
}

.title {
  text-align: center;
}

.title h1 {
  margin: 0;
  font-size: 31px;
  font-weight: 600;
  line-height: 34px;
}

.title span {
  display: block;
  color: #7c7b80;
  font-size: 24px;
  line-height: 32px;
}

.avatar {
  justify-self: end;
  width: 70px;
  height: 70px;
  border-radius: 50%;
  background: linear-gradient(#ffcd6a, #ffa45c);
  font-size: 28px;
  font-weight: 700;
}

.chat {
  position: relative;
  display: flex;
  flex: 1;
  flex-direction: column;
  align-items: flex-start;
  gap: 13px;
  padding: 38px 19px 11px;
  overflow: hidden;
}

.wallpaper {
  position: absolute;
  inset: 0;
  width: 100%;
  height: 100%;
}

.msg {
  position: relative;
  padding: 9px 19px 11px;
  border-radius: 30px;
  background-attachment: fixed;
  font-size: 30px;
  line-height: 41px;
}

.msg::after {
  content: "";
  position: absolute;
  bottom: 0;
  width: 29px;
  height: 30px;
  background: inherit;
}

.msg p {
  display: flow-root;
  margin: 0;
  white-space: nowrap;
}

.in {
  background-image:
    linear-gradient(to right, #2f223400 10%, #302234 85%),
    linear-gradient(#1c2a36 18%, #1f2632 36%, #28262f 46%, #332626 58%, #35271f 90%);
}

.in::after {
  left: -8px;
  clip-path: path("M8 0 V14 Q7 25 0 30 Q11 30 21 25 L29 20 L19 0 Z");
}

.in a {
  color: #4488f8;
  text-decoration: none;
}

.out {
  align-self: flex-end;
  background-image: linear-gradient(#a052cc 14%, #964ae6 32%, #8f48f8 42%, #824cff 57%, #6c56ff 69%, #4a60ff 82%);
}

.out::after {
  right: -8px;
  clip-path: path("M21 0 V14 Q22 25 29 30 Q18 30 8 25 L0 20 L10 0 Z");
}

.out a {
  color: inherit;
  text-decoration-thickness: 2px;
  text-underline-offset: 4px;
}

.has-reply {
  padding-top: 19px;
}

.reply {
  display: flex;
  flex-direction: column;
  margin: 0 0 10px;
  padding: 6px 12px;
  border-left: 6px solid #fff;
  border-radius: 8px;
  background: rgb(255 255 255 / .11);
  font-size: 25px;
  line-height: 32px;
}

.reply strong {
  font-weight: 600;
}

.stamp {
  display: flex;
  align-items: center;
  gap: 3px;
  float: right;
  height: 32px;
  margin: 14px 0 -5px 12px;
  color: rgb(255 255 255 / .45);
  font-size: 22px;
  line-height: 32px;
}

.out .stamp {
  margin-right: -5px;
  margin-left: 9px;
  color: rgb(255 255 255 / .5);
}

.checks {
  width: 27px;
  height: 16px;
  color: #fff;
}

.bottom {
  padding: 11px 19px 15px 18px;
  border-top: 1px solid #2c2929;
  background: linear-gradient(to right, #22201c, #221e1f 50%, #221c22);
}

.composer {
  display: flex;
  align-items: center;
  gap: 18px;
}

.icon {
  display: flex;
  flex: none;
}

.icon svg {
  fill: none;
  stroke: #878586;
  stroke-width: 3;
  stroke-linecap: round;
  stroke-linejoin: round;
}

.field {
  display: flex;
  flex: 1;
  align-items: center;
  height: 61px;
  padding: 0 14px 0 24px;
  border-radius: 31px;
  background: #060606;
}

.field input {
  flex: 1;
  min-width: 0;
  padding: 0;
  border: 0;
  outline: 0;
  background: none;
  color: #fff;
  font: inherit;
  font-size: 30px;
}

.field input::placeholder {
  color: #828282;
  opacity: 1;
}

.home {
  width: 262px;
  height: 10px;
  margin: 51px auto 0;
  border-radius: 5px;
  background: #fff;
}
```
